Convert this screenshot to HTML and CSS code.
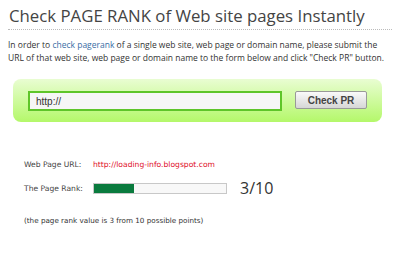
FILE: index.html
```html
<!DOCTYPE html>
<html lang="en">
<head>
    <meta charset="UTF-8">
    <title>Check PAGE RANK</title>
    <link rel="stylesheet" href="styles.css">
</head>
<body>
    <h1 class="title">Check PAGE RANK of Web site pages Instantly</h1>
    <p class="intro">In order to <a href="#">check pagerank</a> of a single web site, web page or domain name, please submit the URL of that web site, web page or domain name to the form below and click "Check PR" button.</p>

    <form class="pr-form">
        <input type="text" class="url-input" value="http://">
        <button type="button" class="check-btn">Check PR</button>
    </form>

    <div class="result">
        <div class="row">
            <span class="label">Web Page URL:</span>
            <a class="site" href="#">http://loading-info.blogspot.com</a>
        </div>
        <div class="row">
            <span class="label">The Page Rank:</span>
            <div class="bar"><div class="fill" style="width: 30%"></div></div>
            <span class="score">3/10</span>
        </div>
        <p class="note">(the page rank value is 3 from 10 possible points)</p>
    </div>
</body>
</html>
```

FILE: styles.css
```css
body {
    margin: 0;
    padding: 0 4px 0 8px;
    background: #fff;
    font-family: "Open Sans", Verdana, sans-serif;
    color: #333;
}
.title {
    margin: 0 4px 0 0;
    padding: 7px 0 4px 1px;
    font-family: "Open Sans", sans-serif;
    font-weight: normal;
    font-size: 16.8px;
    line-height: 18px;
    white-space: nowrap;
    color: #444;
    border-bottom: 1px dotted #bbb;
}
.intro {
    margin: 8px 6px 0 0;
    font-size: 8.5px;
    line-height: 13px;
    color: #333;
}
.intro a {
    color: #3a6ea5;
    text-decoration: none;
}
.pr-form {
    display: flex;
    align-items: flex-start;
    margin: 15px 14px 0 5px;
    padding: 12px 15px 11px 15px;
    height: 20px;
    border-radius: 8px;
    background: linear-gradient(to bottom, #e9fdd2, #b4f86a);
}
.url-input {
    width: 254px;
    height: 20px;
    box-sizing: border-box;
    margin: 0;
    padding: 0 6px;
    border: 2px solid #5ec529;
    background: #f6f6f6;
    font-family: "Liberation Sans", Arial, sans-serif;
    font-size: 10px;
    color: #333;
}
.check-btn {
    margin-left: 13px;
    width: 72px;
    height: 18px;
    padding: 0;
    border: 1px solid #999;
    border-radius: 2px;
    background: linear-gradient(to bottom, #fafafa, #d6d6d6);
    font-family: "Liberation Sans", Arial, sans-serif;
    font-weight: bold;
    font-size: 10px;
    color: #444;
}
.result {
    padding: 36px 0 0 16px;
}
.row {
    display: flex;
    align-items: center;
    height: 12px;
    margin-bottom: 12px;
    font-family: "DejaVu Sans", sans-serif;
    font-size: 7.6px;
}
.label {
    width: 69px;
    color: #444;
}
.site {
    color: #e0102a;
    text-decoration: none;
}
.bar {
    width: 132px;
    height: 9px;
    border: 1px solid #c8c8c8;
    background: #f8f8f8;
}
.fill {
    height: 100%;
    background: #0a7b3e;
}
.score {
    margin-left: 13px;
    font-family: "Open Sans", sans-serif;
    font-size: 16px;
    color: #333;
}
.note {
    margin: 22px 0 0;
    font-family: "DejaVu Sans", sans-serif;
    font-size: 7.2px;
    color: #333;
}
```
